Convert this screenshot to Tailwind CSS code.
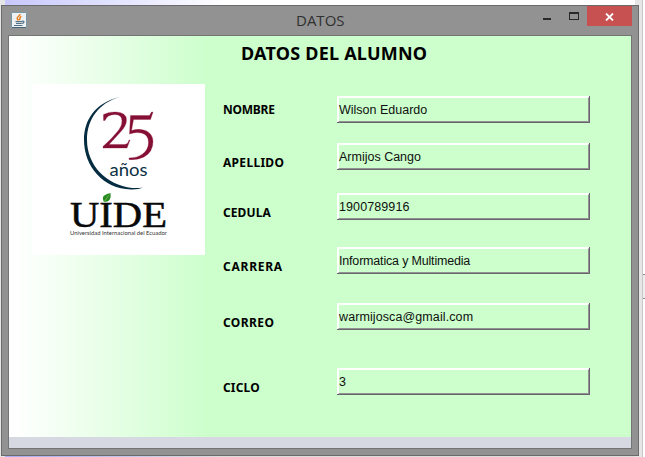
<!DOCTYPE html>
<html lang="es">
<head>
<meta charset="utf-8">
<title>DATOS</title>
<script src="https://cdn.jsdelivr.net/npm/@tailwindcss/browser@4"></script>
</head>
<body class="w-[645px] h-[457px] overflow-hidden bg-white relative">
<!-- desktop behind the window -->
<div class="absolute left-0 top-0 w-[5px] h-[457px] bg-[#e6e6e6]"></div>
<div class="absolute left-[5px] top-0 w-[630px] h-[5px] bg-linear-to-r from-[#c8c8ff] from-0% to-white to-35%"></div>
<div class="absolute left-[5px] top-[456px] w-[630px] h-px bg-linear-to-r from-[#aaaaf5] to-[#ddd] to-35%"></div>
<div class="absolute left-[635px] top-0 w-[8px] h-[457px] bg-[#e6e6e6] border-r border-[#c8c8c8]"></div>
<div class="absolute left-[643px] top-[274px] w-[2px] h-[25px] border-y border-[#888] bg-[#eee]"></div>

<main class="absolute left-px top-[5px] w-[638px] h-[451px] border border-[#6b6b6b] bg-[#929292] flex flex-col px-[6px] pb-[6px]">
  <header class="h-[29px] shrink-0 flex relative justify-between">
    <svg class="w-4 h-4 mt-[6px] ml-[3px]" viewBox="0 0 16 16">
      <rect x=".5" y=".5" width="15" height="15" rx=".6" fill="#edf1f2" stroke="#7797a9"/>
      <path d="M1 15.5h14" stroke="#456579"/>
      <g fill="none" stroke="#e87817" stroke-width="1.4"><path d="M9 2.200C9.400 4 5.300 4.700 6.200 6.800L7.500 8.500"/><path d="M10.400 4.400C7.700 5.700 9.500 6.300 8.500 8.300"/></g>
      <g fill="none" stroke="#527287" stroke-width="1.2"><path d="M4.500 9.600H11M5 11.500h5.500M3 13.500h8.500M11 9.300c3-1 2.500 2-.3 2.200"/></g>
    </svg>
    <h1 class="absolute left-[288px] top-[4px] text-[15px] leading-[20px] text-[#303030] tracking-[0px] font-['Open_Sans',sans-serif]">DATOS</h1>
    <div class="flex h-[20px]">
      <svg class="w-[45px] h-5" viewBox="0 0 45 20"><path d="M1 12h8v2H1zM27 6h10v8H27zM28 8v5h8V8z" fill="#292929" fill-rule="evenodd"/></svg>
      <div class="w-[45px] h-[20px] bg-[#c75050] flex justify-center items-center">
        <svg class="w-[9px] h-[8px] mt-[2px]" viewBox="0 0 9 8"><path d="M1 .5l7 7M8 .5l-7 7" stroke="white" stroke-width="1.8"/></svg>
      </div>
    </div>
  </header>
  <section class="w-[624px] h-[414px] border border-[#747474] flex flex-col">
    <div class="h-[401px] bg-linear-to-r from-white from-[4px] to-[#ccffcc] to-[200px] flex flex-col">
      <h2 class="ml-[232px] mt-[6px] h-[23px] text-[18px] leading-[22px] font-bold whitespace-nowrap text-black tracking-[0.23px] font-['Noto_Sans','Open_Sans',sans-serif]">DATOS DEL ALUMNO</h2>
      <div class="flex pl-[23px]">
        <div class="mt-[19px] w-[173px] h-[171px] bg-white shrink-0">
          <svg class="w-[173px] h-[171px]" viewBox="32 84 173 171">
            <path d="M119.5 97C95 103 84 120 84 140C84 166 103 189 131 189.400Q139 189.500 143 187.500Q138 188.400 132 187.900C106 185 87 165 87 140C87 119 99 103 119.500 97Z" fill="#052d41"/>
            <g fill="#860f35" stroke="#860f35" stroke-width=".3"><path d="M103 148V146.500Q112 138.500 118 131Q122 126 122 121Q122 114.500 115 114.500Q107 114.500 105 120.500H103.500V114.500Q109 111.500 116 112Q126.500 112.500 126.500 120Q126.500 126 120 132.500L109 144.500H124Q128 144.500 129 140H130L127 148Z"/><path d="M130.500 115.500L149.500 115.500L151.500 112H153L150.500 119.500H133.500L131.500 130.500Q140 128 146.500 131Q153 134.500 153 141.500Q153 152 144 157Q137 160.500 129 159.500V158Q137 158 142 154.500Q148.500 150 148.500 142.500Q148.500 134.500 141.500 133Q136 131.500 129.500 134Z"/></g>
            <text x="109.500" y="175.500" textLength="38" lengthAdjust="spacingAndGlyphs" fill="#0b3043" font-size="18" font-family="Lato">años</text>
            <text x="70" y="226.500" textLength="97" lengthAdjust="spacingAndGlyphs" fill="#090909" stroke="#090909" stroke-width=".5" font-size="35" font-family="Liberation Serif">UIDE</text>
            <path d="M103.500 201C101 195 107 194 110.500 193Q112 202 104 202Z" fill="#288b20"/><path d="M104 202L109 195" stroke="#9cc774" stroke-width=".6"/>
            <text x="70" y="234.500" textLength="97" lengthAdjust="spacingAndGlyphs" fill="#333" font-size="6" font-family="Lato">Universidad Internacional del Ecuador</text>
          </svg>
        </div>
        <div class="ml-[18px] mt-[35px] w-[114px] flex flex-col text-[12px] leading-[20px] font-bold text-black font-['Noto_Sans','Open_Sans',sans-serif]">
          <span class="tracking-[-0.25px]">NOMBRE</span>
          <span class="mt-[33px] tracking-[0.3px]">APELLIDO</span>
          <span class="mt-[30px] tracking-[0.1px]">CEDULA</span>
          <span class="mt-[34px] tracking-[0.75px]">CARRERA</span>
          <span class="mt-[36px] tracking-[0.4px]">CORREO</span>
          <span class="mt-[45px] tracking-[0.15px]">CICLO</span>
        </div>
        <div class="mt-[31px] w-[253px] flex flex-col text-[12.5px] leading-[25px] text-[#101010] font-['Liberation_Sans',Arial,sans-serif] *:h-[27px] *:shrink-0 *:border-2 *:border-t-white *:border-l-white *:border-r-[#929292] *:border-b-[#929292] *:relative *:whitespace-nowrap">
          <div>Wilson Eduardo<i class="absolute -inset-[2px] border-r border-b border-[#69656e]"></i></div>
          <div class="mt-[20px]">Armijos Cango<i class="absolute -inset-[2px] border-r border-b border-[#69656e]"></i></div>
          <div class="mt-[23px] tracking-[0.1px]">1900789916<i class="absolute -inset-[2px] border-r border-b border-[#69656e]"></i></div>
          <div class="mt-[27px] tracking-[-0.18px]">Informatica y Multimedia<i class="absolute -inset-[2px] border-r border-b border-[#69656e]"></i></div>
          <div class="mt-[29px] tracking-[0.1px]">warmijosca@gmail.com<i class="absolute -inset-[2px] border-r border-b border-[#69656e]"></i></div>
          <div class="mt-[38px]">3<i class="absolute -inset-[2px] border-r border-b border-[#69656e]"></i></div>
        </div>
      </div>
    </div>
    <div class="h-[11px] bg-[#d6d9e2]"></div>
  </section>
</main>
</body>
</html>
